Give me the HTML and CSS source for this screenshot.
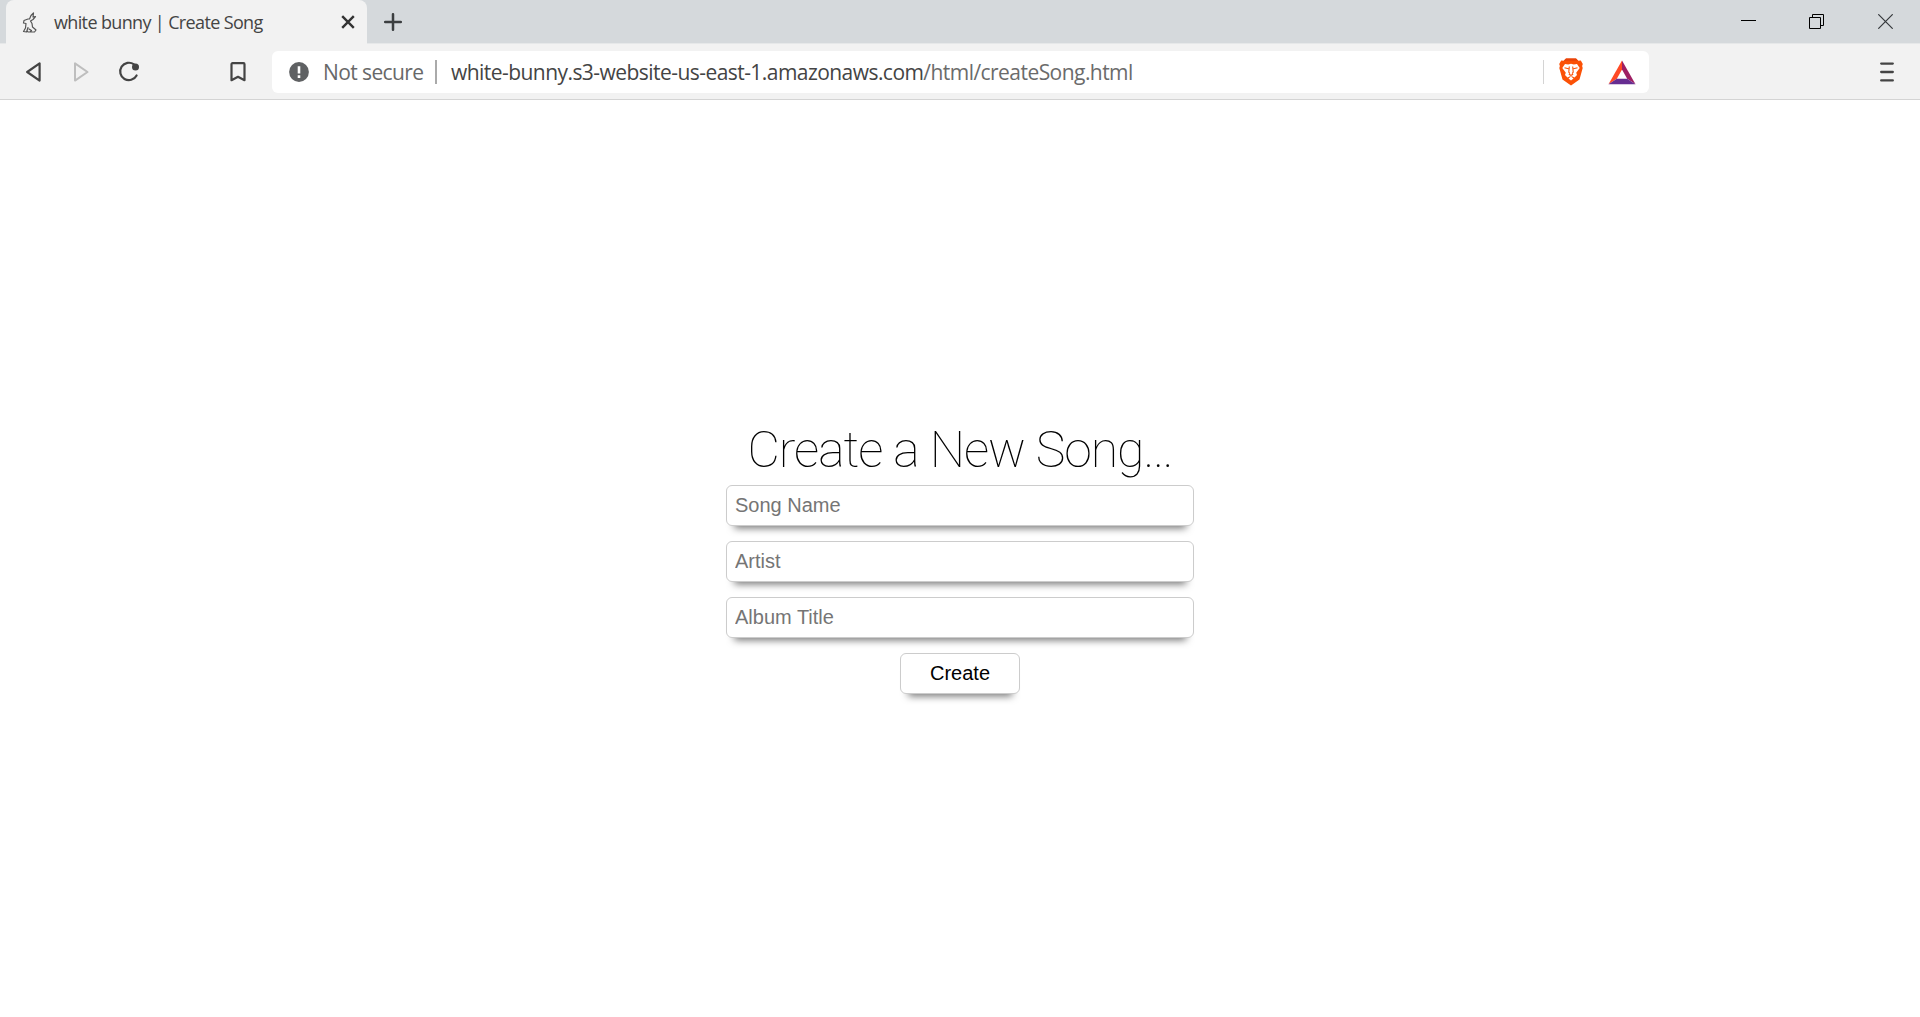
FILE: index.html
```html
<!DOCTYPE html>
<html lang="en">
<head>
<meta charset="utf-8">
<title>white bunny | Create Song</title>
<link rel="stylesheet" href="styles.css">
</head>
<body>
<header class="tabs">
  <div class="tab">
    <svg class="favicon" width="16" height="22" viewBox="0 0 16 22" fill="none" stroke="#555" stroke-width="1.2" stroke-linejoin="round" stroke-linecap="round"><path d="M7.500 7 9 3.500 11.500 1 11 5l2.500-.5L11 7.500 8.500 9 10 11.500 10.500 15 14 18 12.500 20H8l1.500-1.500L7 17M7.500 7 6 7 2 8.500 1.500 11 4 11.500 3.500 16 1.500 19.500 4.500 20 6 15.500M5 18.500l1 1.500h2"/></svg>
    <span class="tab-title">white bunny | Create Song</span>
    <svg class="tab-close" width="14" height="14" viewBox="0 0 14 14" stroke="#333" stroke-width="2.400"><path d="M1.200 1.200l11.600 11.600M12.800 1.200l-11.600 11.600"/></svg>
  </div>
  <svg class="new-tab" width="18" height="18" viewBox="0 0 18 18" stroke="#3b3e40" stroke-width="2.500" stroke-linecap="round"><path d="M9 1.200v15.600M1.200 9h15.600"/></svg>
  <div class="window-controls">
    <svg width="15" height="15" viewBox="0 0 15 15" fill="#000"><path d="M0 6h15v1H0z"/></svg>
    <svg width="15" height="15" viewBox="0 0 15 15" fill="none" stroke="#000"><path d="M.5 3.500h11v11H.5zM3.500 3V.5h11v11H12"/></svg>
    <svg width="15" height="15" viewBox="0 0 15 15" stroke="#34383b" stroke-width="1.200"><path d="M.3.300l14.400 14.400M14.700.3.300 14.700"/></svg>
  </div>
</header>
<nav class="toolbar">
  <svg class="back" width="16" height="20" viewBox="0 0 16 20" fill="none" stroke="#444" stroke-width="2.200" stroke-linejoin="round"><path d="M13.600 1.400v17.200L1.200 10z"/></svg>
  <svg class="forward" width="16" height="20" viewBox="0 0 16 20" fill="none" stroke="#bebebe" stroke-width="2" stroke-linejoin="round"><path d="M2 1.400v17.200L14.500 10z"/></svg>
  <svg class="reload" width="22" height="22" viewBox="0 0 22 22"><path d="M16 3.400A8.700 8.700 0 1 0 18.600 14.500" fill="none" stroke="#444" stroke-width="2.200" stroke-linecap="round"/><circle cx="17.500" cy="6" r="3.500" fill="#444"/></svg>
  <svg class="bookmark" width="16" height="20" viewBox="0 0 16 20" fill="none" stroke="#444" stroke-width="2.200" stroke-linejoin="round"><path d="M2.500 1.200h11a1 1 0 0 1 1 1v16L8 14.800l-6.500 3.400v-16a1 1 0 0 1 1-1z"/></svg>
  <div class="address">
    <svg class="warning" width="20" height="20" viewBox="0 0 20 20"><circle cx="10" cy="10" r="9.900" fill="#5f6163"/><path d="M8.700 4.200h2.600v7.300H8.700zM8.700 13.300h2.600v2.600H8.700z" fill="#fff"/></svg>
    <span class="security">Not secure</span>
    <span class="divider"></span>
    <span class="url">white-bunny.s3-website-us-east-1.amazonaws.com<span class="path">/html/createSong.html</span></span>
    <span class="shield-divider"></span>
    <svg class="lion" width="24" height="28" viewBox="0 0 24 28"><path d="M7 .5h10l2.300 2.200 2.500-.2 2 3.500-.7 2 .6 2-3.200 11.500L12 27.500 3.500 21.500.3 10l.6-2-.7-2 2-3.500 2.500.2z" fill="#fb5106"/><path d="M7 .5h10l2.300 2.200H4.700z" fill="#e8430a"/><path d="M6 6l3.200.4L12 5.800l2.800.6L18 6l2.700 4-3.500 4.700.8 2.300-2.500 2.500-2.500-1.300-1 .4 2.500 2L12 22.500l-2.500-1.900 2.500-2-1-.4-2.500 1.300L6 17l.8-2.300L3.300 10z" fill="#fff"/><path d="M5.500 9.700l4 1M18.500 9.700l-4 1M10.300 8.500l-.5 5.500 1 1.600M13.700 8.500l.5 5.500-1 1.600M9.800 16.300l2.200 1 2.200-1" fill="none" stroke="#fb5106" stroke-width="1.100"/></svg>
    <svg class="bat" width="28" height="25" viewBox="0 0 28 25"><path d="M14 .5.500 24.200l8.300-5.400L14 9.500z" fill="#ff4a25"/><path d="M14 .5l13.500 23.700-8.300-5.400L14 9.500z" fill="#9e1f63"/><path d="M.5 24.200h27l-8.300-5.400H8.800z" fill="#662d91"/></svg>
  </div>
  <svg class="menu" width="14" height="20" viewBox="0 0 14 20" stroke="#444" stroke-width="2.300" stroke-linecap="round"><path d="M1.200 1.600h11.600M1.200 10h11.600M1.200 18.400h11.600"/></svg>
</nav>
<main class="page">
  <form class="song-form">
    <h1 class="heading">Create a New Song...</h1>
    <input class="field" type="text" placeholder="Song Name">
    <input class="field" type="text" placeholder="Artist">
    <input class="field" type="text" placeholder="Album Title">
    <button class="create" type="button">Create</button>
  </form>
</main>
</body>
</html>
```
FILE: styles.css
```css
* { box-sizing: border-box; }
body { margin: 0; height: 1017px; overflow: hidden; background: #fff; font-family: "Open Sans", "Noto Sans", sans-serif; }
svg { display: block; flex: none; }

.tabs { display: flex; height: 44px; padding-left: 6px; background: #d5d9dc; border-bottom: 1px solid #e6e8e9; }
.tab { display: flex; align-items: center; width: 361px; height: 44px; padding: 0 12px 0 16px; background: #f2f2f2; border-radius: 8px 8px 0 0; }
.favicon { margin-top: 1px; }
.tab-title { margin: 0 0 1px 16px; font-size: 18px; line-height: 24px; letter-spacing: -0.64px; color: #444; white-space: nowrap; }
.tab-close { margin-left: auto; }
.new-tab { margin: 13px 0 0 17px; }
.window-controls { display: flex; margin: 14px 27px 0 auto; }
.window-controls svg + svg { margin-left: 53px; }
.window-controls svg:last-child { margin-left: 54px; }

.toolbar { display: flex; align-items: center; height: 56px; padding: 1px 26px 0; background: #f2f2f2; border-bottom: 1px solid #d4d4d4; }
.forward { margin-left: 31px; }
.reload { margin-left: 29px; }
.bookmark { margin-left: 90px; }
.address { display: flex; align-items: center; width: 1377px; height: 42px; margin-left: 26px; padding: 0 13px 0 17px; background: #fff; border-radius: 6px; color: #444; font-size: 21px; white-space: nowrap; }
.security { width: 99px; margin-left: 14px; letter-spacing: -0.6px; color: #686868; }
.divider { width: 2px; height: 24px; margin: 0 14px 0 13px; background: #aaa; }
.url { letter-spacing: -0.55px; }
.path { color: #6b6b6b; }
.shield-divider { width: 1px; height: 24px; margin: 0 15px 0 auto; background: #d4d4d4; }
.bat { margin-left: 25px; }
.menu { margin-left: auto; }

.page { display: flex; justify-content: center; padding-top: 321px; }
.song-form { display: flex; flex-direction: column; align-items: center; width: 468px; }
.heading { margin: 0 0 5px; font: 250 50px/59px Roboto, sans-serif; letter-spacing: -1.05px; color: #000; white-space: nowrap; }
.field, .create { height: 41px; border: 1px solid #ccc; border-radius: 6px; background: #fff; box-shadow: 0 10px 7.5px -7.5px #777; font: 20px "Liberation Sans", Arial, sans-serif; }
.field { width: 468px; margin: 0 0 15px; padding: 0 8px; }
.field::placeholder { color: #757575; }
.create { width: 120px; padding: 0; color: #000; }
```
